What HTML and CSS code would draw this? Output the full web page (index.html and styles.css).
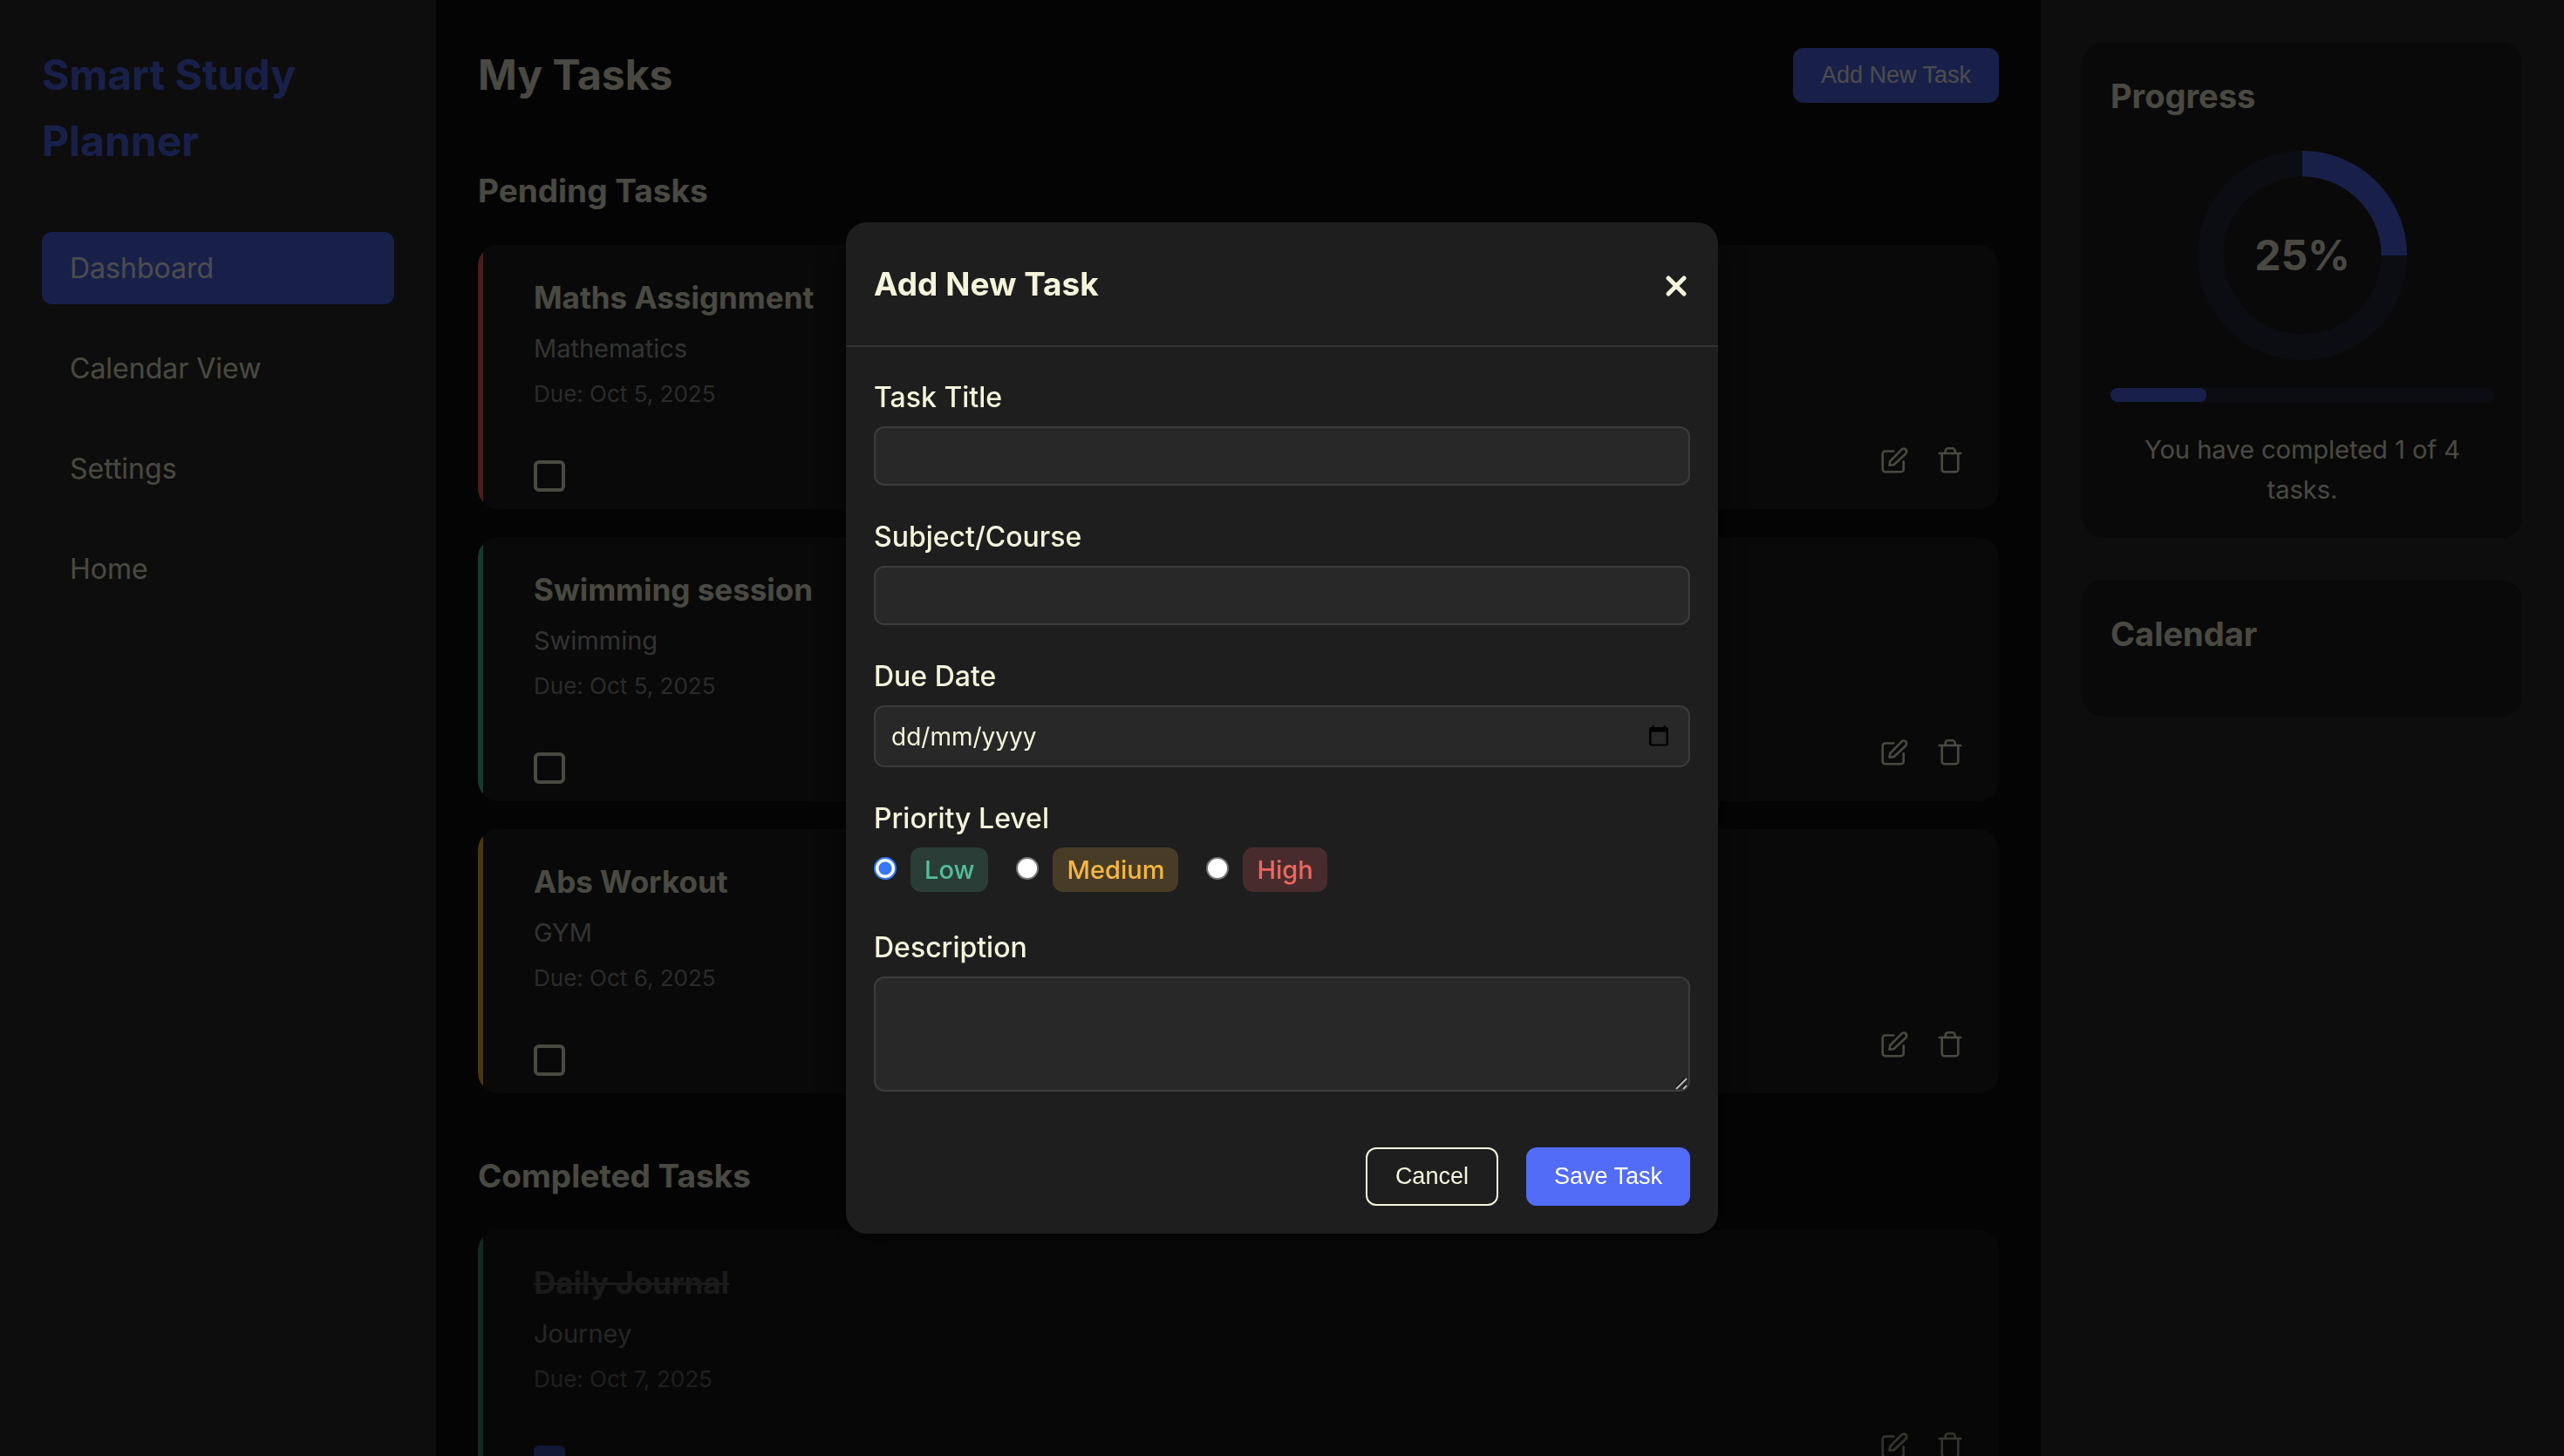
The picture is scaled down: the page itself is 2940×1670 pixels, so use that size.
FILE: index.html
```html
<!DOCTYPE html>
<html lang="en">
<head>
<meta charset="utf-8">
<meta name="viewport" content="width=device-width, initial-scale=1">
<title>Smart Study Planner</title>
<link rel="stylesheet" href="styles.css">
</head>
<body>
<svg class="sprite" aria-hidden="true">
  <symbol id="icon-edit" viewBox="0 0 36 36">
    <path d="M17.300 7.500H7.700A3 3 0 0 0 4.700 10.500V28.300A3 3 0 0 0 7.700 31.300H25.700A3 3 0 0 0 28.700 28.300V19.300"/>
    <path d="M12.500 23.700L13.200 19.200L26.500 5.600A3.300 3.300 0 0 1 31.300 10.200L17.700 23Z"/>
  </symbol>
  <symbol id="icon-trash" viewBox="0 0 36 36">
    <path d="M5.700 10H30.300"/>
    <path d="M8.700 10V28.300A3 3 0 0 0 11.700 31.300H24.300A3 3 0 0 0 27.300 28.300V10"/>
    <path d="M12.700 10V7.300A3 3 0 0 1 15.700 4.300H20.700A3 3 0 0 1 23.700 7.300V10"/>
  </symbol>
</svg>

<div class="app">
  <nav class="sidebar">
    <h1 class="brand">Smart Study Planner</h1>
    <ul class="menu">
      <li><a class="menu-link active" href="#dashboard">Dashboard</a></li>
      <li><a class="menu-link" href="#calendar">Calendar View</a></li>
      <li><a class="menu-link" href="#settings">Settings</a></li>
      <li><a class="menu-link" href="#home">Home</a></li>
    </ul>
  </nav>

  <main class="content">
    <header class="content-header">
      <h2 class="page-title">My Tasks</h2>
      <button class="btn btn-primary" type="button">Add New Task</button>
    </header>

    <section class="task-section">
      <h3 class="section-title">Pending Tasks</h3>
      <div class="task-list">
        <article class="task high">
          <h4 class="task-title">Maths Assignment</h4>
          <p class="task-subject">Mathematics</p>
          <p class="task-due">Due: Oct 5, 2025</p>
          <div class="task-footer">
            <input class="task-check" type="checkbox" aria-label="Complete Maths Assignment">
            <div class="task-actions">
              <button class="icon-btn" type="button" aria-label="Edit"><svg class="icon"><use href="#icon-edit"/></svg></button>
              <button class="icon-btn" type="button" aria-label="Delete"><svg class="icon"><use href="#icon-trash"/></svg></button>
            </div>
          </div>
        </article>
        <article class="task low">
          <h4 class="task-title">Swimming session</h4>
          <p class="task-subject">Swimming</p>
          <p class="task-due">Due: Oct 5, 2025</p>
          <div class="task-footer">
            <input class="task-check" type="checkbox" aria-label="Complete Swimming session">
            <div class="task-actions">
              <button class="icon-btn" type="button" aria-label="Edit"><svg class="icon"><use href="#icon-edit"/></svg></button>
              <button class="icon-btn" type="button" aria-label="Delete"><svg class="icon"><use href="#icon-trash"/></svg></button>
            </div>
          </div>
        </article>
        <article class="task medium">
          <h4 class="task-title">Abs Workout</h4>
          <p class="task-subject">GYM</p>
          <p class="task-due">Due: Oct 6, 2025</p>
          <div class="task-footer">
            <input class="task-check" type="checkbox" aria-label="Complete Abs Workout">
            <div class="task-actions">
              <button class="icon-btn" type="button" aria-label="Edit"><svg class="icon"><use href="#icon-edit"/></svg></button>
              <button class="icon-btn" type="button" aria-label="Delete"><svg class="icon"><use href="#icon-trash"/></svg></button>
            </div>
          </div>
        </article>
      </div>
    </section>

    <section class="task-section">
      <h3 class="section-title">Completed Tasks</h3>
      <div class="task-list">
        <article class="task low done">
          <h4 class="task-title">Daily Journal</h4>
          <p class="task-subject">Journey</p>
          <p class="task-due">Due: Oct 7, 2025</p>
          <div class="task-footer">
            <input class="task-check" type="checkbox" checked aria-label="Complete Daily Journal">
            <div class="task-actions">
              <button class="icon-btn" type="button" aria-label="Edit"><svg class="icon"><use href="#icon-edit"/></svg></button>
              <button class="icon-btn" type="button" aria-label="Delete"><svg class="icon"><use href="#icon-trash"/></svg></button>
            </div>
          </div>
        </article>
      </div>
    </section>
  </main>

  <aside class="aside">
    <section class="panel">
      <h3 class="panel-title">Progress</h3>
      <div class="ring"><span class="ring-value">25%</span></div>
      <div class="bar"><div class="bar-fill" style="width:25%"></div></div>
      <p class="progress-text">You have completed 1 of 4 tasks.</p>
    </section>
    <section class="panel">
      <h3 class="panel-title">Calendar</h3>
    </section>
  </aside>
</div>

<div class="overlay">
  <div class="modal" role="dialog" aria-labelledby="modal-title">
    <header class="modal-header">
      <h3 class="modal-title" id="modal-title">Add New Task</h3>
      <button class="close" type="button" aria-label="Close">
        <svg class="close-icon" viewBox="0 0 24 24"><path d="M3 3L21 21M21 3L3 21"/></svg>
      </button>
    </header>
    <form class="form">
      <div class="field">
        <label class="label" for="title">Task Title</label>
        <input class="control" id="title" type="text">
      </div>
      <div class="field">
        <label class="label" for="subject">Subject/Course</label>
        <input class="control" id="subject" type="text">
      </div>
      <div class="field">
        <label class="label" for="due">Due Date</label>
        <div class="date">
          <input class="control control-date" id="due" type="text" value="dd/mm/yyyy">
          <svg class="date-icon" viewBox="0 0 22 24"><path fill-rule="evenodd" d="M3.500 0H5.500V2H16.500V0H18.500V2H20A2 2 0 0 1 22 4V21.500A2 2 0 0 1 20 23.500H2A2 2 0 0 1 0 21.500V4A2 2 0 0 1 2 2H3.500ZM2.500 7.500V21.500H19.500V7.500Z"/></svg>
        </div>
      </div>
      <fieldset class="field">
        <legend class="label">Priority Level</legend>
        <div class="options">
          <label class="option"><input class="radio" type="radio" name="priority" checked><span class="tag tag-low">Low</span></label>
          <label class="option"><input class="radio" type="radio" name="priority"><span class="tag tag-medium">Medium</span></label>
          <label class="option"><input class="radio" type="radio" name="priority"><span class="tag tag-high">High</span></label>
        </div>
      </fieldset>
      <div class="field">
        <label class="label" for="description">Description</label>
        <div class="area">
          <textarea class="control control-area" id="description"></textarea>
          <svg class="grip" viewBox="0 0 14 14"><path class="grip-shade" d="M0 12L12 0M8 12L12 8"/><path d="M1 13L13 1M9 13L13 9"/></svg>
        </div>
      </div>
      <div class="form-actions">
        <button class="btn btn-outline" type="button">Cancel</button>
        <button class="btn btn-primary" type="submit">Save Task</button>
      </div>
    </form>
  </div>
</div>
</body>
</html>
```
FILE: styles.css
```css
:root {
  --bg: #101010;
  --surface: #1e1e1e;
  --side: #2c2c2c;
  --text: #f5f5dc;
  --primary: #526cf7;
  --track: #292c3d;
  --low: #54be9c;
  --medium: #f5b742;
  --high: #ef665e;
}

* { box-sizing: border-box; margin: 0; padding: 0; }

html, body { height: 100%; }

body {
  background: var(--bg);
  color: var(--text);
  font-family: Inter, sans-serif;
  font-size: 32px;
  line-height: 1.6;
  overflow: hidden;
}

.sprite { display: none; }

.app {
  display: grid;
  grid-template-columns: 500px 1fr 600px;
  height: 100%;
}

.sidebar { background: var(--side); padding: 48px; }
.brand { color: var(--primary); font-size: 48px; font-weight: 700; line-height: 76px; margin-bottom: 66px; }
.menu { list-style: none; display: flex; flex-direction: column; gap: 32px; }
.menu-link {
  display: block;
  padding: 16px 32px;
  border-radius: 12px;
  color: var(--text);
  text-decoration: none;
  line-height: 51px;
}
.menu-link.active { background: var(--primary); color: #fff; }

.content { padding: 48px; overflow: hidden; }
.content-header { display: flex; align-items: center; justify-content: space-between; margin-bottom: 64px; }
.page-title { font-size: 48px; font-weight: 700; line-height: 76px; }
.section-title { font-size: 37px; font-weight: 700; line-height: 61px; margin-bottom: 32px; }
.task-section { margin-bottom: 64px; }
.task-list { display: flex; flex-direction: column; gap: 32px; }

.btn {
  border: 0;
  border-radius: 12px;
  padding: 16px 32px;
  font-family: "Liberation Sans", Arial, sans-serif;
  font-size: 27px;
  line-height: 31px;
}
.btn-primary { background: var(--primary); color: #fff; }
.btn-outline { background: transparent; border: 2px solid var(--text); color: var(--text); }

.task {
  background: linear-gradient(to right, var(--accent) 6px, var(--surface) 6px);
  border-radius: 24px;
  padding: 32px 38px 20px 64px;
}
.task.high { --accent: var(--high); }
.task.low { --accent: var(--low); }
.task.medium { --accent: var(--medium); }
.task.done { opacity: 0.7; }
.task-title { font-size: 35px; font-weight: 700; line-height: 56px; }
.task-subject { font-size: 29px; line-height: 46px; margin-top: 8px; color: #aaa; }
.task-due { font-size: 26px; line-height: 42px; margin-top: 8px; color: #909090; }
.done .task-title { color: #777; text-decoration: line-through; }
.task-footer { display: flex; align-items: flex-end; justify-content: space-between; margin-top: 37px; }
.task-check {
  appearance: none;
  width: 36px;
  height: 36px;
  border: 4px solid var(--text);
  border-radius: 6px;
}
.task-check:checked { background: var(--primary); border-color: var(--primary); }
.task-actions { display: flex; gap: 28px; margin-bottom: 18px; }
.icon-btn { background: none; border: 0; display: flex; color: var(--text); }
.icon { width: 36px; height: 36px; fill: none; stroke: currentColor; stroke-width: 2.6; stroke-linecap: round; stroke-linejoin: round; }

.aside { background: var(--side); padding: 48px; display: flex; flex-direction: column; gap: 48px; }
.panel { background: var(--surface); border-radius: 24px; padding: 32px; }
.panel-title { font-size: 38px; font-weight: 700; line-height: 61px; margin-bottom: 32px; }
.ring {
  width: 240px;
  height: 240px;
  margin: 0 auto 32px;
  border-radius: 50%;
  display: grid;
  place-items: center;
  background: radial-gradient(circle closest-side, var(--surface) 90px, transparent 91px), conic-gradient(var(--primary) 25%, var(--track) 0);
}
.ring-value { font-size: 48px; font-weight: 700; }
.bar { height: 16px; border-radius: 8px; background: var(--track); }
.bar-fill { height: 100%; border-radius: 8px; background: var(--primary); }
.progress-text { font-size: 29px; line-height: 46px; text-align: center; margin-top: 32px; }

.overlay {
  position: fixed;
  inset: 0;
  background: rgba(0, 0, 0, 0.7);
  display: grid;
  place-items: center;
}
.modal {
  width: 1000px;
  background: var(--surface);
  border-radius: 24px;
  box-shadow: 0 8px 40px rgba(0, 0, 0, 0.5);
}
.modal-header {
  display: flex;
  align-items: center;
  justify-content: space-between;
  padding: 40px 32px;
  border-bottom: 2px solid #333;
}
.modal-title { font-size: 37px; font-weight: 700; line-height: 61px; }
.close { background: none; border: 0; color: var(--text); display: flex; padding: 8px 4px 4px; }
.close-icon { width: 24px; height: 24px; fill: none; stroke: currentColor; stroke-width: 5; stroke-linecap: round; }

.form { padding: 32px; }
.field { border: 0; margin-bottom: 33px; }
.label { display: block; font-size: 32px; font-weight: 500; line-height: 51px; margin-bottom: 8px; }
.control {
  display: block;
  width: 100%;
  height: 68px;
  padding: 16px 18px;
  border: 2px solid #3c3c3c;
  border-radius: 12px;
  background: #282828;
  color: var(--text);
  font-family: inherit;
  font-size: 28px;
}
.control-date { height: 71px; }
.control-area { height: 132px; resize: none; }
.date, .area { position: relative; }
.date-icon { position: absolute; right: 25px; top: 23px; width: 22px; height: 24px; fill: #000; }
.grip { position: absolute; right: 3px; bottom: 2px; width: 14px; height: 14px; stroke: #b8b8b8; stroke-width: 2; }
.grip-shade { stroke: #111; }
.options { display: flex; gap: 32px; padding-bottom: 5px; }
.option { display: flex; align-items: center; gap: 16px; }
.radio {
  appearance: none;
  width: 26px;
  height: 26px;
  margin-bottom: 4px;
  border-radius: 50%;
  background: #fff;
  border: 2px solid #767676;
}
.radio:checked { border-color: #3478f6; background: radial-gradient(circle, #3478f6 7px, #fff 8px); }
.tag { padding: 0 16px; border-radius: 12px; font-size: 29px; font-weight: 500; line-height: 51px; }
.tag-low { background: #2a3d37; color: var(--low); }
.tag-medium { background: #493c26; color: var(--medium); }
.tag-high { background: #482c2d; color: var(--high); }
.form-actions { display: flex; justify-content: flex-end; gap: 32px; margin-top: 64px; }
```
